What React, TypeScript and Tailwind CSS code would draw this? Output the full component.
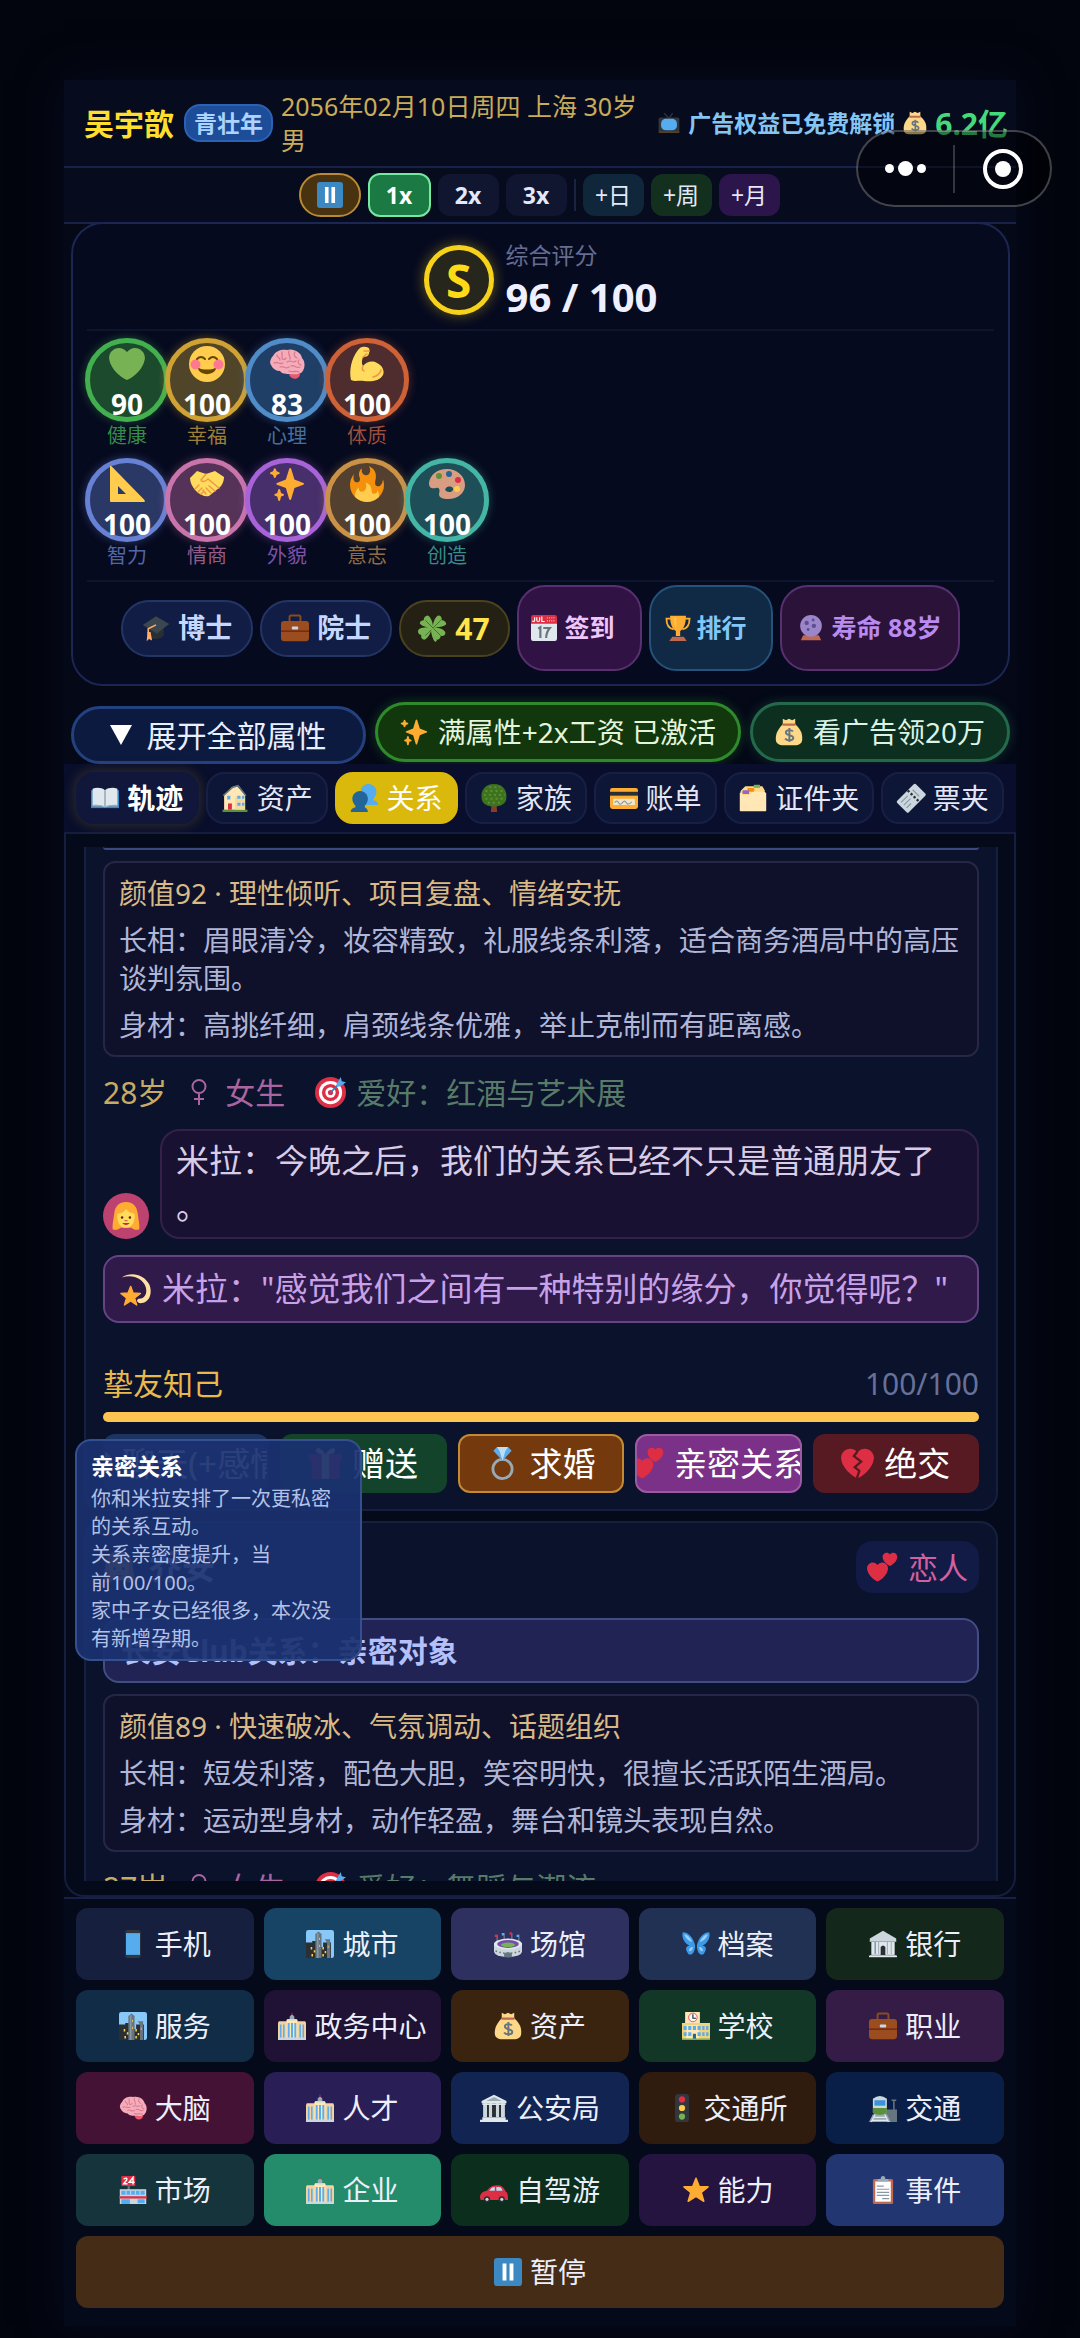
import React from "react";

const HEART =
  "M35.885 11.833c0-5.45-4.418-9.868-9.867-9.868-3.308 0-6.227 1.633-8.018 4.129-1.791-2.496-4.71-4.129-8.017-4.129-5.45 0-9.868 4.417-9.868 9.868 0 .772.098 1.52.266 2.241C1.751 22.587 11.216 31.568 18 34.034c6.783-2.466 16.249-11.447 17.617-19.959.17-.721.268-1.469.268-2.242z";

const govBuilding = (
  <>
    <path fill="#99AAB5" d="M15 6q3-5 6 0v5h-6z" />
    <path fill="#F3D2A2" d="M1 12h10l1-3h12l1 3h10l1 2v21H0V14z" />
    <path fill="#FFE8B6" d="M11 10h14v25H11z" />
    <path fill="#DD2E44" d="M17.500 1h1v3h-1z" />
    <path
      fill="#5DADEC"
      d="M2.500 16h2v17h-2zm4 0h2v17h-2zm6-2h2.500v19h-2.500zm4.200 0h2.600v19h-2.600zm4.300 0h2.500v19H21zm6.500 2h2v17h-2zm4 0h2v17h-2z"
    />
    <path fill="#CCD6DD" d="M0 33h36v3H0zM13 9h10v2H13z" />
  </>
);

const columns = (
  <>
    <path fill="#E1E8ED" d="M18 1 34 9v3H2V9z" />
    <path fill="#99AAB5" d="M18 4 28 9H8z" />
    <path fill="#292F33" d="M6 14h24v16H6z" />
    <path fill="#CCD6DD" d="M4 12h5v18H4zm7.500 0h4v18h-4zm9 0h4v18h-4zM27 12h5v18h-5z" />
    <path fill="#E1E8ED" d="M3 30h30v3H3zM0 33h36v3H0zM3 12h30v2H3z" />
  </>
);

const icons: Record<string, React.ReactNode> = {
  heart: <path fill="#77B255" d={HEART} />,
  sparkles: (
    <path
      fill="#FFAC33"
      d="M34.347 16.893l-8.899-3.294-3.323-10.891c-.128-.42-.517-.708-.956-.708-.439 0-.828.288-.956.708l-3.322 10.891-8.9 3.294c-.393.146-.653.519-.653.938 0 .418.26.793.653.938l8.895 3.293 3.324 11.223c.126.424.516.715.959.715.442 0 .833-.291.959-.716l3.324-11.223 8.896-3.293c.391-.144.652-.518.652-.937 0-.418-.261-.792-.653-.938zM14.347 27.894l-2.314-.856-.9-3.3c-.118-.436-.513-.738-.964-.738-.451 0-.846.302-.965.737l-.9 3.3-2.313.856c-.393.146-.653.52-.653.938 0 .418.26.792.653.938l2.301.853.907 3.622c.112.444.511.756.97.756.459 0 .858-.312.97-.757l.907-3.622 2.301-.853c.393-.144.653-.519.653-.937 0-.418-.26-.793-.653-.937zM10.009 6.231l-2.364-.875-.876-2.365c-.145-.393-.519-.653-.938-.653-.418 0-.792.26-.938.653l-.875 2.365-2.365.875c-.393.146-.653.52-.653.938 0 .418.26.793.653.938l2.365.875.875 2.365c.146.393.52.653.938.653.418 0 .792-.26.938-.653l.875-2.365 2.365-.875c.393-.146.653-.52.653-.938 0-.418-.26-.792-.653-.938z"
    />
  ),
  fire: (
    <>
      <path
        fill="#F4900C"
        d="M35 19c0-2.062-.367-4.039-1.04-5.868-.46 5.389-3.333 8.157-6.335 6.868-2.812-1.208-.917-5.917-.777-8.164.236-3.809-.012-8.169-6.931-11.794 2.875 5.500.333 8.917-2.333 9.125-2.958.231-5.667-2.542-4.667-7.042-3.238 2.386-3.332 6.402-2.333 9 1.042 2.708-.042 4.958-2.583 5.208-2.840.280-4.418-3.041-2.963-8.333C2.520 10.965 1 14.805 1 19c0 9.389 7.611 17 17 17s17-7.611 17-17z"
      />
      <path
        fill="#FFCC4D"
        d="M28.394 23.999c.148 3.084-2.561 4.293-4.019 3.709-2.106-.843-1.541-2.291-2.083-5.291s-2.625-5.083-5.708-6c2.250 6.333-1.247 8.667-3.080 9.084-1.872.426-3.753-.001-3.968-4.007C7.352 23.668 6 26.676 6 30c0 .368.023.730.055 1.090C9.125 34.124 13.342 36 18 36s8.875-1.876 11.945-4.910c.032-.360.055-.722.055-1.090 0-2.187-.584-4.236-1.606-6.001z"
      />
    </>
  ),
  tv: (
    <>
      <path stroke="#31373D" strokeWidth="2" fill="none" d="M10 2l8 8 6-8" />
      <rect x="1" y="9" width="34" height="25" rx="3" fill="#31373D" />
      <path stroke="#66471f" strokeWidth="2" d="M1 33h34" />
      <rect x="5" y="11" width="26" height="19" rx="8" fill="#55ACEE" />
    </>
  ),
  money: (
    <>
      <path fill="#FDD888" d="M10 8h16c9 8 9 14 9 19 0 6-4 8-10 8H11c-6 0-10-2-10-8 0-5 1-11 9-19z" />
      <path fill="#FDD888" d="M10 1l4 2 4-2 4 2 4-2v7H10z" />
      <path fill="#BF6952" d="M10 7h16q2 1.500 0 3H10q-2-1.500 0-3z" />
      <path
        fill="none"
        stroke="#67757F"
        strokeWidth="2.500"
        d="M23 17.500c-1.500-2.500-9-3-9 1.300 0 4.400 9.500 2.400 9.500 6.700 0 4.500-8.500 4-10.500.800M18.500 13v18"
      />
    </>
  ),
  pause: (
    <>
      <rect width="36" height="36" rx="4" fill="#3B88C3" />
      <path fill="#fff" d="M11 7h5v22h-5zm9 0h5v22h-5z" />
    </>
  ),
  smile: (
    <>
      <circle cx="18" cy="18" r="18" fill="#FFCC4D" />
      <circle cx="6.500" cy="18.500" r="5" fill="#FF7892" />
      <circle cx="29.500" cy="18.500" r="5" fill="#FF7892" />
      <path
        fill="none"
        stroke="#664500"
        strokeWidth="2"
        strokeLinecap="round"
        d="M8 13q4-4 8 0M20 13q4-4 8 0"
      />
      <path fill="#664500" d="M10 22c3 2 13 2 16 0 1 0 1 1 .500 2-3 5.500-14 5.500-17 0-.500-1-.500-2 .500-2z" />
    </>
  ),
  brain: (
    <>
      <path fill="#EA596E" d="M20 27c3-1 9-1 11 1 0 4-5 6-8 4-2-1-3-3-3-5z" />
      <path
        fill="#F4ABBA"
        d="M4 10C7 4 14 3 18 4c6-2 14 2 15 8 4 4 3 12-1 15-4 2-8 1-11 1-4 0-8 0-10-3-4 0-7-2-9-6-2-3 0-7 2-9z"
      />
      <path
        fill="none"
        stroke="#DB7A8E"
        strokeWidth="1.300"
        strokeLinecap="round"
        d="M8 9c0 3 3 2 3 5M13 6v6c0 2 3 2 4 0M20 5c-2 4 2 4 1 8M26 6c-2 3 0 5 2 6M5 17c4-2 5 2 9 0M18 16c4-3 5 2 9-1M30 14c-2 3 0 4 2 5M11 21c4-2 5 3 9 0M22 20c4-2 4 3 9 1M20 25c4 2 7-1 10 1"
      />
    </>
  ),
  muscle: (
    <>
      <path
        fill="#FFDC5D"
        d="M2 34C0 25 2 13 9 4c2-3 5-4 8-3 4 0 4 4 3 6 0 3-3 4-6 4-1 3-2 6 0 9 3-4 9-6 14-3 5 2 8 8 6 12-3 6-12 7-19 6-5-1-9 1-13-1z"
      />
      <path
        fill="none"
        stroke="#EF9645"
        strokeWidth="1.500"
        strokeLinecap="round"
        d="M14 20c-1 2-1 4 1 5M24 31c4-1 7-3 8-7M14 11c2-1 2-3 4-3M15 5h5"
      />
    </>
  ),
  ruler: (
    <path
      fill="#FFCC4D"
      fillRule="evenodd"
      d="M1 0.500Q1-1 2.500.300L35.500 34q1 2-1 2H2q-1 0-1-1zM9 20v8h8z"
    />
  ),
  handshake: (
    <>
      <path fill="#FFDC5D" d="M1 12 8 5l9 3 9-3 9 6c0 4-2 9-5 11L20 30c-4 1-9-1-13-5-4-4-6-9-6-13z" />
      <path
        fill="none"
        stroke="#EF9645"
        strokeWidth="1.400"
        strokeLinecap="round"
        d="M17 8l-5 6c1 3 5 1 7-1l11 9M20 20l6 5M17 22l5 5M14 24l3 4M6 23l4-4M9 26l4-4M12 28l3-3"
      />
    </>
  ),
  palette: (
    <>
      <path
        fill="#D99E82"
        fillRule="evenodd"
        d="M18 3C8 3 1 9 0 17c0 5 3 6 7 5s4 3 3 6c0 4 4 5 9 5 10 0 17-6 17-14 0-9-8-16-18-16zm-1 19c3-3 8-1 7 2-1 2-4 3-7 1-1-1-1-2 0-3z"
      />
      <circle cx="10" cy="10" r="3" fill="#5C913B" />
      <circle cx="20" cy="8" r="3" fill="#226699" />
      <circle cx="29" cy="14" r="3" fill="#DD2E44" />
      <circle cx="28" cy="23" r="3" fill="#FFCC4D" />
    </>
  ),
  gradcap: (
    <>
      <path fill="#292F33" d="M7 15h21v12c-3 6-15 7-21 2z" />
      <path fill="#3b464e" d="M1 14 18 3l17 10-16 12z" />
      <path fill="none" stroke="#FFAC6B" strokeWidth="2" d="M18 14 8 19v6" />
      <path fill="#FFAC6B" d="M7 23h4l2 11-4-2-3 3z" />
    </>
  ),
  briefcase: (
    <>
      <path fill="none" stroke="#8a4b1e" strokeWidth="2.500" d="M11 9V4q0-2 2-2h10q2 0 2 2v5" />
      <rect y="9" width="36" height="26" rx="4" fill="#9c4d20" />
      <path stroke="#662113" strokeWidth="1.500" d="M0 22h36" />
      <rect x="14" y="16" width="8" height="4" rx="1" fill="#CCD6DD" />
    </>
  ),
  clover: (
    <>
      <path
        fill="#77B255"
        d="M17 17C12 18 3 16 1 12c0-3 3-4 5-4 0-3 2-6 5-6 4 1 7 10 7 14 0-5 3-13 7-14 3 0 5 3 4 6 3 0 6 2 6 5-2 4-11 4-15 4 5 0 13 3 14 7 0 3-3 5-6 4 0 3-3 6-6 5-4-2-6-9-6-13-1 5-5 12-9 13-3 0-5-3-4-6-3 0-5-3-4-6 2-4 9-4 15-4z"
      />
      <path fill="none" stroke="#3E721D" strokeWidth="1.200" d="M8 8l20 20M28 8 8 28" />
      <path fill="none" stroke="#77B255" strokeWidth="3" d="M17 18q0 12 5 17" />
    </>
  ),
  calendar: (
    <>
      <rect y="3" width="36" height="33" rx="3" fill="#E1E8ED" />
      <path fill="#DD2E44" d="M3 0h30q3 0 3 3v9H0V3q0-3 3-3z" />
      <path
        fill="none"
        stroke="#fff"
        strokeWidth="1.600"
        d="M5 3v5q-1 2-3 0M8 3v4q0 2 2 2t2-2V3M15 2v7h4"
      />
      <path stroke="#f4a0aa" strokeDasharray="1.500 1.500" strokeWidth="2" d="M22 4h12M22 8h12" />
      <path fill="none" stroke="#66757F" strokeWidth="3" d="M10 19l3-2v15M17 18h9q-5 6-5 14" />
    </>
  ),
  trophy: (
    <>
      <path
        fill="none"
        stroke="#FFAC33"
        strokeWidth="2.500"
        d="M8 5H2c0 9 3 14 10 15M28 5h6c0 9-3 14-10 15"
      />
      <path fill="#FFAC33" d="M7 1h22c0 13-4 19-8 21v7h-6v-7C11 20 7 14 7 1z" />
      <path fill="#FFCC4D" d="M12 3h4v16c-3-3-4-8-4-16z" opacity=".6" />
      <path fill="#C1694F" d="M10 30h16l4 6H6z" />
    </>
  ),
  crystal: (
    <>
      <path fill="#BF6952" d="M7 28h22l3 7H4z" />
      <circle cx="18" cy="15" r="15" fill="#9b86c9" />
      <circle cx="12" cy="11" r="3" fill="#5f4d94" />
      <circle cx="22" cy="15" r="3" fill="#5f4d94" />
      <circle cx="14" cy="20" r="2" fill="#5f4d94" />
      <circle cx="21" cy="7" r="2" fill="#5f4d94" />
    </>
  ),
  book: (
    <>
      <path fill="#3B88C3" d="M0 8h36v23H0z" />
      <path fill="#E1E8ED" d="M2 6c6-2 12-1 16 2 4-3 10-4 16-2v22c-6-1-12 0-16 2-4-2-10-3-16-2z" />
      <path fill="#99AAB5" d="M17 8h2v22h-2zM2 27c6-1 12 0 16 2 4-2 10-3 16-2v2H2z" />
    </>
  ),
  house: (
    <>
      <path fill="#5C913B" d="M2 33h32v3H2z" />
      <path fill="#FFE8B6" d="M4 14 14 4l6-2 11 12v19H4z" />
      <path fill="#F4D9A0" d="M18 16h13v17H18z" />
      <path fill="none" stroke="#66757F" strokeWidth="2" d="M3 15 14 5l8-3 10 13" />
      <path fill="#55ACEE" d="M8 15h4v5H8zm13 0h4v4h-4zm6 0h3v4h-3zM21 24h4v4h-4zm6 0h3v4h-3z" />
      <path fill="#DD2E44" d="M9 25h5v8H9z" />
    </>
  ),
  people: (
    <>
      <path fill="#55ACEE" d="M24 0c6 0 10 5 10 10 0 4-2 7-4 9v2c4 1 6 3 6 6H16l-2-20c1-4 5-7 10-7z" />
      <path fill="#269" d="M13 9c6 0 10 5 10 10 0 4-2 7-4 9v2c2 1 4 3 4 6H1c0-4 3-5 6-6v-2c-2-2-4-5-4-9C3 14 7 9 13 9z" />
    </>
  ),
  tree: (
    <>
      <path fill="#8a3b2a" d="M15 24h6l1 12h-8z" />
      <path fill="#3E721D" d="M18 0C29 0 35 8 34 17c0 9-8 12-16 12S2 26 2 17C1 8 7 0 18 0z" />
      <path
        stroke="#5C913B"
        strokeWidth="2.500"
        strokeDasharray="2.500 4"
        d="M7 9h23M5 14h27M7 19h24M10 24h17M12 4h14"
      />
    </>
  ),
  card: (
    <>
      <rect y="5" width="36" height="27" rx="3" fill="#FFAC33" />
      <path fill="#292F33" d="M0 10h36v5H0z" />
      <path fill="#F4E6C8" d="M4 19h28v8H4z" />
      <path fill="none" stroke="#8899A6" strokeWidth="1.500" d="M6 24q3-4 5 0t5 0 5 0 7-1" />
    </>
  ),
  dividers: (
    <>
      <path fill="#FFD983" d="M2 9 8 3h22l3 5v20H2z" />
      <path fill="#77B255" d="M19 1h8v4h-8z" />
      <path fill="#FFE8B6" d="M1 12q0-1 1-1l3 3h9l3-4h16l2 2v22q0 1-1 1H2q-1 0-1-1z" />
      <path fill="#F4900C" d="M11 5h8q2 2 0 5h-8z" />
      <path fill="#9266CC" d="M5 8h8v5H5q-2-2 0-5z" />
    </>
  ),
  ticket: (
    <g transform="rotate(-45 18 18)">
      <rect x="1" y="8" width="34" height="21" rx="2" fill="#CCD6DD" />
      <path stroke="#292F33" strokeWidth="3" strokeDasharray="3 2.500" d="M22 8v21" />
      <path stroke="#8899A6" strokeWidth="1.500" d="M5 13h12M5 18h12M5 23h8M27 12v12" />
    </g>
  ),
  target: (
    <>
      <circle cx="18" cy="18" r="18" fill="#DD2E44" />
      <circle cx="18" cy="18" r="13.500" fill="#fff" />
      <circle cx="18" cy="18" r="10" fill="#DD2E44" />
      <circle cx="18" cy="18" r="6" fill="#fff" />
      <circle cx="18" cy="18" r="3" fill="#DD2E44" />
      <path stroke="#2a7fb8" strokeWidth="2" d="M18 18 30 6" />
      <path fill="#55ACEE" d="M25 8l5-8 1 5 5 1-7 5h-4z" />
    </>
  ),
  woman: (
    <>
      <path fill="#FFAC33" d="M18 0C9 0 4 6 3 14 2 22 0 30 1 35c3 2 8 0 10-2h14c2 2 7 4 10 2 1-5-1-13-2-21C32 6 27 0 18 0z" />
      <path fill="#FFDC5D" d="M7 15c6 0 9-3 11-6 3 4 7 6 11 6 1 10-3 18-11 18S6 25 7 15z" />
      <circle cx="13" cy="20" r="1.600" fill="#662113" />
      <circle cx="23" cy="20" r="1.600" fill="#662113" />
      <path stroke="#C1694F" strokeWidth="1.500" d="M16 24h4" />
      <path fill="#DF1F32" d="M13 27h10q-5 5-10 0z" />
    </>
  ),
  dizzy: (
    <>
      <path
        fill="#FFE0A3"
        d="M2 5C12-2 27 1 33 13c4 10 0 21-10 21-4 0-5-4-2-5 7 0 10-6 8-13C26 6 14 1 2 5z"
      />
      <path
        fill="#FFAC33"
        stroke="#FFAC33"
        strokeWidth="1.500"
        strokeLinejoin="round"
        d="m12 15 2.800 7.500 8.200.500-6.500 5 2.300 8L12 31.500 5 36l2.300-8L1 23l8-.500z"
      />
    </>
  ),
  speech: (
    <>
      <path fill="#BDDDF4" d="M18 3c10 0 18 5 18 13s-8 13-18 13l-10 6 2-8C4 25 0 21 0 16 0 8 8 3 18 3z" />
      <circle cx="9" cy="16" r="2.500" fill="#2A6797" />
      <circle cx="18" cy="16" r="2.500" fill="#2A6797" />
      <circle cx="27" cy="16" r="2.500" fill="#2A6797" />
    </>
  ),
  gift: (
    <>
      <path fill="#FDD888" d="M18 8C12-1 6 0 8 6l10 4 10-4c2-6-4-7-10 2z" />
      <path fill="#DD2E44" d="M0 8h36v7h-3v20H3V15H0z" />
      <path fill="#FDD888" d="M14 8h8v27h-8z" />
    </>
  ),
  ring: (
    <>
      <circle cx="18" cy="24" r="10.500" fill="none" stroke="#99AAB5" strokeWidth="3" />
      <path fill="#5DADEC" d="M8 4l4-4h12l4 4-10 11z" />
      <path fill="#BDDDF4" d="M12 0h12l-3 5h-6zM15 5h6l-3 10z" />
    </>
  ),
  hearts: (
    <>
      <g transform="translate(0 11) scale(.68)">
        <path fill="#DD2E44" d={HEART} />
      </g>
      <g transform="translate(18 0) scale(.48)">
        <path fill="#DD2E44" d={HEART} />
      </g>
    </>
  ),
  broken: (
    <>
      <path fill="#DD2E44" d={HEART} />
      <path fill="none" stroke="#551a22" strokeWidth="2.500" d="M18 5l-4 5 8 6-7 6 5 4-3 9" />
    </>
  ),
  phone: (
    <>
      <rect x="8" width="20" height="36" rx="3" fill="#31373D" />
      <path fill="#55ACEE" d="M9 4h18v28H9z" />
    </>
  ),
  city: (
    <>
      <rect width="36" height="36" rx="3" fill="#88C9F9" />
      <path fill="#292F33" d="M0 16h8v-2h5v22H0zM22 16h10v20H22zM6 22h26v14H6z" />
      <path fill="#66757F" d="M12 5l4-3 4 3v31h-8zM24 12h7v24h-4V16z" />
      <path fill="#8899A6" d="M14 4h2v32h-2z" />
      <path
        fill="#FFCC4D"
        d="M6 22h2v3H6zm4 4h2v3h-2zm-3 5h2v3H7zm14-9h2v3h-2zm3 5h2v3h-2zm-3 4h2v3h-2zM28 20h1v3h-1zM17 10h1v3h-1zM17 19h1v3h-1z"
      />
    </>
  ),
  gov: govBuilding,
  stadium: (
    <>
      <path stroke="#99AAB5" strokeWidth="1" d="M4 6v10M13 4v9M23 4v9M32 6v10" />
      <path fill="#DD2E44" d="M1 6h3v3H1zM20 3h3v3h-3z" />
      <path fill="#5DADEC" d="M10 4h3v3h-3zM29 6h3v3h-3z" />
      <path fill="#CCD6DD" d="M0 17h36v11q-1 6-18 7Q1 34 0 28z" />
      <ellipse cx="18" cy="18" rx="18" ry="7" fill="#E1E8ED" />
      <ellipse cx="18" cy="18" rx="14" ry="5" fill="#744EAA" />
      <ellipse cx="18" cy="19" rx="9" ry="3" fill="#77B255" />
      <path stroke="#66757F" strokeWidth="2" strokeDasharray="2 3" d="M2 27q16 6 32 0" fill="none" />
      <path fill="#66757F" d="M13 35v-5q5-3 10 0v5z" />
    </>
  ),
  butterfly: (
    <>
      <path
        fill="#3B9BE8"
        d="M17 20C14 9 8 3 1 3c-2 6 2 15 9 17-5 0-6 5-3 9 2 5 9 4 10-8zM19 20C22 9 28 3 35 3c2 6-2 15-9 17 5 0 6 5 3 9-2 5-9 4-10-8z"
      />
      <path
        fill="#9AD0F8"
        d="M13 15C11 10 7 6 3 5c1 5 5 9 10 10zM23 15c2-5 6-9 10-10-1 5-5 9-10 10zM14 22c-3 0-5 2-5 5 3 1 5-2 5-5zM22 22c3 0 5 2 5 5-3 1-5-2-5-5z"
      />
      <path stroke="#292F33" strokeWidth="1.500" d="M18 13v13" />
    </>
  ),
  bank: (
    <>
      <path fill="#CCD6DD" d="M18 1 35 11v4H1v-4z" />
      <path fill="#E1E8ED" d="M3 15h30v17H3z" />
      <path fill="#8899A6" d="M7 15h2v16H7zm5 0h1v16h-1zm11 0h1v16h-1zm5 0h1v16h-1z" />
      <path fill="#292F33" d="M15 22q3-4 6 0v10h-6z" />
      <path fill="#99AAB5" d="M1 32h34v2H1zM1 14h34v1H1z" />
      <path fill="#E1E8ED" d="M0 33h36v2H0z" />
    </>
  ),
  school: (
    <>
      <path fill="#FFE8B6" d="M4 0h19v35H4z" />
      <path fill="#F3D27A" d="M0 14h4v21H0zM23 14h13v21H23zM4 14h19v3H4z" />
      <circle cx="14" cy="7" r="5.500" fill="#F5F8FA" stroke="#DD2E44" strokeWidth="1" />
      <path stroke="#292F33" strokeWidth="1.500" fill="none" d="M14 3v5h4" />
      <path
        fill="#5DADEC"
        d="M2 18h4v5H2zm6 0h4v5H8zm6 0h4v5h-4zm6 0h4v5h-4zm6 0h3v5h-3zm5 0h3v5h-3zM2 26h4v5H2zm6 0h4v5H8zm12 0h4v5h-4zm6 0h3v5h-3zm5 0h3v5h-3z"
      />
      <path fill="#269" d="M14 28h4v7h-4z" />
      <path fill="#77B255" d="M0 34h36v2H0z" />
    </>
  ),
  classical: columns,
  light: (
    <>
      <rect x="9" width="18" height="36" rx="4" fill="#31373D" />
      <circle cx="18" cy="7" r="4" fill="#DD2E44" />
      <circle cx="18" cy="18" r="4" fill="#FFCC4D" />
      <circle cx="18" cy="29" r="4" fill="#77B255" />
    </>
  ),
  train: (
    <>
      <path fill="#66757F" d="M22 20h14v16H18z" />
      <path stroke="#66757F" strokeWidth="2" d="M32 7v15M29 8h6" />
      <path fill="#99AAB5" d="M5 26h18l5 10H0z" />
      <path stroke="#e1e8ed" strokeWidth="1.500" d="M8 26 3 36M20 26l5 10M6 30h17M4 34h20" />
      <path fill="#CCD6DD" d="M5 6q9-7 18 0v18q-9 6-18 0z" />
      <path fill="#3B94D9" d="M7 8h14v7H7z" />
      <path fill="#5C913B" d="M5 18h18v6q-9 6-18 0z" />
    </>
  ),
  store: (
    <>
      <rect x="3" width="18" height="13" rx="1" fill="#DD2E44" />
      <path
        fill="none"
        stroke="#fff"
        strokeWidth="1.800"
        d="M6 4q5-3 4 1l-4 5h5M18 11V2l-5 6h7"
      />
      <path fill="#66757F" d="M11 13h3v5h-3z" />
      <path fill="#CCD6DD" d="M1 17h34v19H1z" />
      <path fill="#55ACEE" d="M3 19h30v5H3zM3 30h11v6H3zM24 30h9v5h-9z" />
      <path stroke="#E1E8ED" strokeWidth="1" d="M9 19v5M15 19v5M21 19v5M27 19v5" />
      <path fill="#DD2E44" d="M0 26h36v3H0z" />
    </>
  ),
  car: (
    <>
      <path fill="#DD2E44" d="M0 28c0-6 4-8 9-9 4-6 8-7 14-7 6 0 8 4 10 8 3 2 3 5 3 11H1z" />
      <path fill="#BBDDF5" d="M12 19c2-4 4-5 7-5v5zM21 14h3c3 0 4 2 5 5h-8z" />
      <circle cx="9" cy="30" r="4" fill="#292F33" />
      <circle cx="28" cy="30" r="4" fill="#292F33" />
      <circle cx="9" cy="30" r="2" fill="#CCD6DD" />
      <circle cx="28" cy="30" r="2" fill="#CCD6DD" />
    </>
  ),
  star: (
    <path
      fill="#FFAC33"
      stroke="#FFAC33"
      strokeWidth="2"
      strokeLinejoin="round"
      d="m18 3 4.200 10.500L33.500 14l-8.800 7.200 3.300 11.300L18 26.300 8 32.500l3.300-11.300L2.500 14l11.300-.500z"
    />
  ),
  clipboard: (
    <>
      <rect x="5" y="4" width="26" height="32" rx="2" fill="#C1694F" />
      <path fill="#fff" d="M8 7h20v26H8z" />
      <path fill="#99AAB5" d="M11 7V4h4q0-4 3-4t3 4h4v3z" />
      <path stroke="#8899A6" strokeWidth="1.500" d="M10 13h9M10 17h16M10 21h16M10 25h16M17 29h9" />
    </>
  ),
};

function Icon({ name, className = "size-7" }: { name: string; className?: string }) {
  return (
    <svg viewBox="0 0 36 36" aria-hidden="true" className={`shrink-0 overflow-visible ${className}`}>
      {icons[name]}
    </svg>
  );
}

const rings = [
  [
    { icon: "heart", value: 90, label: "健康", tone: "border-[#43b04f] bg-[#1b4a2d] shadow-[0_0_10px_#43b04f66]", text: "text-[#358a48]" },
    { icon: "smile", value: 100, label: "幸福", tone: "border-[#cfa233] bg-[#514529] shadow-[0_0_10px_#cfa23366]", text: "text-[#9c7f35]" },
    { icon: "brain", value: 83, label: "心理", tone: "border-[#508cc8] bg-[#1f3f66] shadow-[0_0_10px_#508cc866]", text: "text-[#44719f]" },
    { icon: "muscle", value: 100, label: "体质", tone: "border-[#cf6137] bg-[#4f2c2d] shadow-[0_0_10px_#cf613766]", text: "text-[#9d4e3a]" },
  ],
  [
    { icon: "ruler", value: 100, label: "智力", tone: "border-[#6781d4] bg-[#2a3866] shadow-[0_0_10px_#6781d466]", text: "text-[#5266a6]" },
    { icon: "handshake", value: 100, label: "情商", tone: "border-[#c974ab] bg-[#553358] shadow-[0_0_10px_#c974ab66]", text: "text-[#985b88]" },
    { icon: "sparkles", value: 100, label: "外貌", tone: "border-[#a863d8] bg-[#472f6c] shadow-[0_0_10px_#a863d866]", text: "text-[#7d51a7]" },
    { icon: "fire", value: 100, label: "意志", tone: "border-[#cb9247] bg-[#54402f] shadow-[0_0_10px_#cb924766]", text: "text-[#926e41]" },
    { icon: "palette", value: 100, label: "创造", tone: "border-[#45b5a5] bg-[#1e4f58] shadow-[0_0_10px_#45b5a566]", text: "text-[#388b86]" },
  ],
];

const tabs = [
  { icon: "book", label: "轨迹", tone: "border-[#10173a] bg-[#10173a] font-bold text-white shadow-[0_0_12px_2px_#6b582f66]" },
  { icon: "house", label: "资产", tone: "border-[#171f45] bg-[#0e1638]" },
  { icon: "people", label: "关系", tone: "border-[#dbb80c] bg-[#dbb80c] text-white" },
  { icon: "tree", label: "家族", tone: "border-[#171f45] bg-[#0e1638]" },
  { icon: "card", label: "账单", tone: "border-[#171f45] bg-[#0e1638]" },
  { icon: "dividers", label: "证件夹", tone: "border-[#171f45] bg-[#0e1638]" },
  { icon: "ticket", label: "票夹", tone: "border-[#171f45] bg-[#0e1638]" },
];

const menu = [
  { icon: "phone", label: "手机", tone: "bg-[#171f3f]" },
  { icon: "city", label: "城市", tone: "bg-[#174364]" },
  { icon: "stadium", label: "场馆", tone: "bg-[#2e305f]" },
  { icon: "butterfly", label: "档案", tone: "bg-[#203154]" },
  { icon: "bank", label: "银行", tone: "bg-[#13271a]" },
  { icon: "city", label: "服务", tone: "bg-[#112c47]" },
  { icon: "gov", label: "政务中心", tone: "bg-[#1f1234]" },
  { icon: "money", label: "资产", tone: "bg-[#3a240f]" },
  { icon: "school", label: "学校", tone: "bg-[#123727]" },
  { icon: "briefcase", label: "职业", tone: "bg-[#341c47]" },
  { icon: "brain", label: "大脑", tone: "bg-[#431235]" },
  { icon: "gov", label: "人才", tone: "bg-[#2a1e56]" },
  { icon: "classical", label: "公安局", tone: "bg-[#122452]" },
  { icon: "light", label: "交通所", tone: "bg-[#301c0f]" },
  { icon: "train", label: "交通", tone: "bg-[#0a1f48]" },
  { icon: "store", label: "市场", tone: "bg-[#15343b]" },
  { icon: "gov", label: "企业", tone: "bg-[#258c6b]" },
  { icon: "car", label: "自驾游", tone: "bg-[#0b2e1d]" },
  { icon: "star", label: "能力", tone: "bg-[#251340]" },
  { icon: "clipboard", label: "事件", tone: "bg-[#223672]" },
];

const actions = [
  { icon: "speech", label: "聊天(+感情)", tone: "border-transparent bg-[#1c3463]" },
  { icon: "gift", label: "赠送", tone: "border-transparent bg-[#14432b]" },
  { icon: "ring", label: "求婚", tone: "border-[#c48a33] bg-[#743a0e]" },
  { icon: "hearts", label: "亲密关系", tone: "border-[#9c5aa3] bg-[#7b3187]" },
  { icon: "broken", label: "绝交", tone: "border-transparent bg-[#571a23]" },
];

function Header() {
  return (
    <header className="flex h-[88px] items-center border-b-2 border-[#18224a] bg-[#070b1e] pr-2 pl-5">
      <h1 className="shrink-0 text-[30px] font-bold text-[#ffdf2e]">吴宇歆</h1>
      <span className="ml-2.5 flex h-[38px] shrink-0 items-center rounded-2xl border-2 border-[#2c62b4] bg-[#1d4c99] px-2 text-[23px] font-bold text-[#acd4ff]">
        青壮年
      </span>
      <p className="ml-2 min-w-0 flex-1 text-[25px] leading-[34px] text-[#c9ac5a]">
        2056年02月10日周四 上海 30岁 男
      </p>
      <div className="flex shrink-0 items-center text-[23px] font-bold text-[#84c5f3]">
        <Icon name="tv" className="mr-2 size-[22px]" />
        广告权益已免费解锁
        <Icon name="money" className="mx-2 size-6" />
        <span className="text-[30px] text-[#45da79]">6.2亿</span>
      </div>
    </header>
  );
}

function SpeedBar() {
  const plain = "h-[42px] w-[61px] rounded-xl";
  return (
    <div className="flex h-14 items-center justify-center gap-[7px] border-b-2 border-[#18224a] bg-[#070b1e] pr-0.5 text-[23px] text-[#e4e8f8]">
      <button aria-label="暂停" className="flex h-11 w-[62px] items-center justify-center rounded-full border-2 border-[#b98a35] bg-[#49320f]">
        <Icon name="pause" className="size-[26px]" />
      </button>
      <button className="h-11 w-[63px] rounded-xl border-2 border-[#77e8a2] bg-[#1b7a43] font-bold text-white">1x</button>
      <button className={`${plain} bg-[#10162f] font-bold`}>2x</button>
      <button className={`${plain} bg-[#10162f] font-bold`}>3x</button>
      <span className="h-8 w-0.5 bg-[#1b2343]" />
      <button className={`${plain} bg-[#0f263b]`}>+日</button>
      <button className={`${plain} bg-[#13301f]`}>+周</button>
      <button className={`${plain} bg-[#2b154a]`}>+月</button>
    </div>
  );
}

function Stats() {
  return (
    <section className="-mt-0.5 mr-1.5 ml-[7px] rounded-[32px] border-2 border-[#1b2652] bg-[#060a1f] px-3.5 pb-[13px]">
      <div className="flex items-center justify-center gap-3 border-b-2 border-[#0f152e] pt-3.5 pb-[7px]">
        <div className="flex size-[70px] items-center justify-center rounded-full border-[5px] border-[#f7d21a] bg-[#26261c] text-[46px] leading-none font-bold text-[#ffda17] shadow-[0_0_14px_#f7d21a66]">
          S
        </div>
        <div>
          <p className="text-[23px] leading-[34px] text-[#666d90]">综合评分</p>
          <p className="text-[40px] leading-[50px] font-bold text-[#eef0ff]">96 / 100</p>
        </div>
      </div>
      <div className="flex flex-col gap-2 border-b-2 border-[#0f152e] pt-[7px] pb-2.5">
        {rings.map((row, i) => (
          <ul key={i} className="flex">
            {row.map((r) => (
              <li key={r.label} className="flex w-20 flex-col items-center">
                <div className={`flex size-[84px] shrink-0 flex-col items-center rounded-full border-[5px] pt-[3px] ${r.tone}`}>
                  <Icon name={r.icon} className="size-9" />
                  <span className="mt-2 text-[28px] leading-7 font-bold text-white">{r.value}</span>
                </div>
                <span className={`text-[20px] leading-7 ${r.text}`}>{r.label}</span>
              </li>
            ))}
          </ul>
        ))}
      </div>
      <div className="flex items-center justify-center gap-[7px] pt-[3px] font-bold">
        <span className="flex h-[57px] items-center gap-2 rounded-[28px] border-2 border-[#233565] bg-[#111d45] px-[19px] text-[27px] text-[#c6d7ff]">
          <Icon name="gradcap" />
          博士
        </span>
        <span className="flex h-[57px] items-center gap-2 rounded-[28px] border-2 border-[#233565] bg-[#111d45] px-[19px] text-[27px] text-[#c6d7ff]">
          <Icon name="briefcase" />
          院士
        </span>
        <span className="flex h-[57px] items-center gap-2 rounded-[28px] border-2 border-[#49421d] bg-[#242014] px-[18px] text-[30px] text-[#ffe44a]">
          <Icon name="clover" />
          47
        </span>
        <button className="flex h-[86px] w-[125px] items-center gap-2 rounded-[28px] border-2 border-[#59306f] bg-[#311245] pl-3 text-[25px] text-[#efc6fb]">
          <Icon name="calendar" className="size-[26px]" />
          签到
        </button>
        <button className="flex h-[86px] w-[124px] items-center gap-1.5 rounded-[28px] border-2 border-[#24527a] bg-[#102945] pl-3.5 text-[25px] text-[#82c7fa]">
          <Icon name="trophy" className="size-[26px]" />
          排行
        </button>
        <button className="flex h-[86px] items-center gap-2 rounded-[28px] border-2 border-[#59306f] bg-[#2b1239] px-4 text-[25px] text-[#b98af0]">
          <Icon name="crystal" className="size-[26px]" />
          寿命 88岁
        </button>
      </div>
    </section>
  );
}

function Boosts() {
  return (
    <div className="flex items-start gap-[9px] pt-4 pr-1.5 pl-[7px] text-[#e8efff]">
      <button className="mt-1 flex h-[58px] flex-1 items-center justify-center gap-3.5 rounded-full border-[3px] border-[#24417f] bg-[#0d1a40] text-[30px]">
        <svg viewBox="0 0 22 20" aria-hidden="true" className="h-5 w-[22px]">
          <path fill="#fff" d="M0 0h22L11 20z" />
        </svg>
        展开全部属性
      </button>
      <button className="flex h-[60px] items-center gap-2.5 rounded-full border-[3px] border-[#2e8a2b] bg-[#12370d] px-[22px] text-[28px] text-[#e4f5dd] shadow-[0_0_12px_#2e8a2b66]">
        <Icon name="sparkles" />
        满属性+2x工资 已激活
      </button>
      <button className="flex h-[60px] items-center gap-2.5 rounded-full border-[3px] border-[#24694a] bg-[#0d2f20] px-[22px] text-[28px] text-[#dbf3e6] shadow-[0_0_12px_#24694a66]">
        <Icon name="money" />
        看广告领20万
      </button>
    </div>
  );
}

function Tabs() {
  return (
    <nav className="flex gap-[7px] border-b-2 border-[#151d3f] bg-[#080e2b] px-3 py-2 text-[28px] text-[#e2e6f6]">
      {tabs.map((t) => (
        <button key={t.label} className={`flex h-[52px] flex-auto items-center justify-center gap-2 rounded-[18px] border-2 ${t.tone}`}>
          <Icon name={t.icon} />
          {t.label}
        </button>
      ))}
    </nav>
  );
}

function Profile({ title, looks, body }: { title: string; looks: string; body: string }) {
  return (
    <div className="mt-[11px] flex flex-col gap-[9px] rounded-xl border-2 border-[#282647] bg-[#0f112b] px-3.5 py-[11px] text-[28px] leading-[38px] text-[#b0b6d8]">
      <p className="text-[#d9ba85]">{title}</p>
      <p>{looks}</p>
      <p>{body}</p>
    </div>
  );
}

function Meta({ age, hobby }: { age: string; hobby: string }) {
  return (
    <div className="mt-[15px] flex h-10 items-center text-[30px]">
      <span className="text-[#c6ab66]">{age}</span>
      <svg viewBox="0 0 16 28" aria-hidden="true" className="mr-[18px] ml-6 h-7 w-4">
        <path fill="none" stroke="#a9659f" strokeWidth="2" d="M8 15v12M3 21h10M8 2a6.500 6.500 0 1 0 0 13A6.500 6.500 0 1 0 8 2z" />
      </svg>
      <span className="mr-[30px] text-[#a9659f]">女生</span>
      <Icon name="target" className="mr-2.5 size-[31px]" />
      <span className="text-[#587a68]">爱好：{hobby}</span>
    </div>
  );
}

function Relations() {
  return (
    <main className="relative min-h-[600px] flex-1 rounded-b-[20px] border-x-2 border-b-2 border-[#151e3e] bg-[#050a1a] pt-[13px] pr-4 pb-3.5 pl-[18px]">
      <div className="flex h-0 min-h-full flex-col gap-2.5 overflow-hidden">
        <article className="shrink-0 rounded-b-[18px] border-x-2 border-b-2 border-[#151f3e] bg-[#0a122c] px-[17px] pb-4">
          <div className="h-[3px] rounded-b-xl border-b-2 border-[#3b4980]" />
          <Profile
            title="颜值92 · 理性倾听、项目复盘、情绪安抚"
            looks="长相：眉眼清冷，妆容精致，礼服线条利落，适合商务酒局中的高压谈判氛围。"
            body="身材：高挑纤细，肩颈线条优雅，举止克制而有距离感。"
          />
          <Meta age="28岁" hobby="红酒与艺术展" />
          <div className="mt-[17px] flex items-end gap-[11px]">
            <span className="flex size-[46px] shrink-0 items-center justify-center rounded-full bg-[#bd4270]">
              <Icon name="woman" />
            </span>
            <p className="flex-1 rounded-[20px] border-2 border-[#35204a] bg-[#191132] px-3.5 py-[7px] text-[33px] leading-[46px] text-[#d8cce6] [line-break:anywhere]">
              米拉：今晚之后，我们的关系已经不只是普通朋友了。
            </p>
          </div>
          <div className="mt-4 flex items-center gap-2.5 rounded-2xl border-2 border-[#654483] bg-[#301a49] px-[15px] py-[9px] text-[33px] leading-[46px] text-[#c8a2e8]">
            <Icon name="dizzy" className="size-8" />
            米拉："感觉我们之间有一种特别的缘分，你觉得呢？"
          </div>
          <div className="mt-[41px] flex justify-between text-[30px] leading-10">
            <span className="text-[#e9b94c]">挚友知己</span>
            <span className="text-[#66719a]">100/100</span>
          </div>
          <div className="mt-2 h-2.5 rounded-full bg-[#ffc553]" />
          <div className="mt-3 grid grid-cols-5 gap-[11px] text-[33px] text-white">
            {actions.map((a) => (
              <button key={a.label} className={`flex h-[59px] min-w-0 items-center justify-center gap-2.5 overflow-hidden rounded-xl border-2 whitespace-nowrap ${a.tone}`}>
                <Icon name={a.icon} className="size-[33px]" />
                {a.label}
              </button>
            ))}
          </div>
        </article>

        <article className="shrink-0 rounded-[18px] border-2 border-[#151f3e] bg-[#0a122c] px-[17px] pt-[18px] pb-4">
          <div className="flex h-[52px] items-center">
            <Icon name="woman" className="mr-3.5 size-8" />
            <h2 className="flex-1 text-[33px] font-bold text-[#dfe4ff]">乔安</h2>
            <span className="flex h-[52px] items-center gap-2.5 rounded-2xl bg-[#111b46] px-[11px] text-[30px] text-[#d3609f]">
              <Icon name="hearts" className="size-[31px]" />
              恋人
            </span>
          </div>
          <p className="mt-[25px] flex h-[65px] items-center rounded-2xl border-2 border-[#424d83] bg-[#202353] px-4 text-[30px] font-bold text-[#b3c0fa]">
            长安Club关系：亲密对象
          </p>
          <Profile
            title="颜值89 · 快速破冰、气氛调动、话题组织"
            looks="长相：短发利落，配色大胆，笑容明快，很擅长活跃陌生酒局。"
            body="身材：运动型身材，动作轻盈，舞台和镜头表现自然。"
          />
          <Meta age="27岁" hobby="舞蹈与潮流" />
        </article>
      </div>

      <aside role="status" className="absolute bottom-[234px] left-[9px] w-[287px] rounded-2xl border-2 border-[#34508e] bg-[#1b3270]/93 px-3.5 pt-2.5 pb-1.5 text-[20px] leading-7 text-[#b4c1e6]">
        <h3 className="mb-1 text-[23px] leading-[30px] font-bold text-white">亲密关系</h3>
        <p>你和米拉安排了一次更私密的关系互动。</p>
        <p>
          关系亲密度提升，当<span className="whitespace-nowrap">前100/100。</span>
        </p>
        <p>家中子女已经很多，本次没有新增孕期。</p>
      </aside>
    </main>
  );
}

function Menu() {
  return (
    <footer className="grid grid-cols-5 gap-2.5 border-t-2 border-[#182145] bg-[#050a1a] px-3 pt-[9px] pb-[18px] text-[28px] text-[#eceffa]">
      {menu.map((m) => (
        <button key={m.label + m.icon} className={`flex h-[72px] items-center justify-center gap-2 rounded-xl ${m.tone}`}>
          <Icon name={m.icon} />
          {m.label}
        </button>
      ))}
      <button className="col-span-5 flex h-[72px] items-center justify-center gap-2 rounded-xl bg-[#442c17]">
        <Icon name="pause" />
        暂停
      </button>
    </footer>
  );
}

export default function App() {
  return (
    <div className="relative h-screen min-h-[1900px] bg-[#03050e] px-16 pt-20 pb-3 font-['Noto_Sans','Noto_Sans_CJK_SC',sans-serif]">
      <div className="flex h-full flex-col bg-[#040817] shadow-[0_0_40px_#060b20]">
        <Header />
        <SpeedBar />
        <Stats />
        <Boosts />
        <Tabs />
        <Relations />
        <Menu />
      </div>

      <div className="absolute top-[130px] right-7 flex h-[77px] w-[196px] items-center rounded-full border-2 border-white/25 bg-black/45">
        <button aria-label="更多" className="flex flex-1 items-center justify-center gap-1">
          <span className="size-[9px] rounded-full bg-white" />
          <span className="size-[15px] rounded-full bg-white" />
          <span className="size-[9px] rounded-full bg-white" />
        </button>
        <span className="h-12 w-0.5 bg-white/20" />
        <button aria-label="关闭" className="flex flex-1 items-center justify-center">
          <span className="flex size-10 items-center justify-center rounded-full border-4 border-white">
            <span className="size-4 rounded-full bg-white" />
          </span>
        </button>
      </div>
    </div>
  );
}
